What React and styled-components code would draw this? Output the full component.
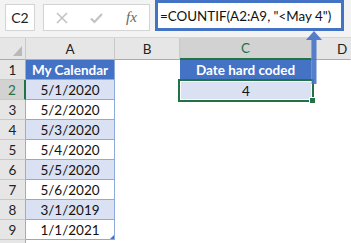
import React from 'react';
import styled, { createGlobalStyle } from 'styled-components';

const dates = ['5/1/2020', '5/2/2020', '5/3/2020', '5/4/2020', '5/5/2020', '5/6/2020', '3/1/2019', '1/1/2021'];

export default function App() {
  return (
    <>
      <GlobalStyle />
      <Window>
        <FormulaBar>
          <NameBox>C2</NameBox>
          <ButtonsBox>
            <svg width="12" height="12" viewBox="0 0 12 12">
              <path d="M1 1 L11 11 M11 1 L1 11" stroke="#c3c3c3" strokeWidth="1.6" fill="none" />
            </svg>
            <svg width="13" height="12" viewBox="0 0 13 12">
              <path d="M1 6.5 L4.5 10 L12 2" stroke="#c3c3c3" strokeWidth="2.2" fill="none" />
            </svg>
            <Fx>fx</Fx>
          </ButtonsBox>
          <FormulaBox>=COUNTIF(A2:A9, "&lt;May 4")</FormulaBox>
        </FormulaBar>

        <Sheet>
          <Corner>
            <svg width="9" height="10" viewBox="0 0 9 10">
              <polygon points="9,0 9,10 0,10" fill="#b9b9b9" />
            </svg>
          </Corner>
          <ColHead>A</ColHead>
          <ColHead>B</ColHead>
          <ColHead $active>C</ColHead>
          <ColHead $last>D</ColHead>

          <RowHead>1</RowHead>
          <TableHead>My Calendar</TableHead>
          <Blank />
          <TableHead>Date hard coded</TableHead>
          <Blank />

          {dates.map((d, i) => {
            const row = i + 2;
            return (
              <React.Fragment key={row}>
                <RowHead $active={row === 2}>{row}</RowHead>
                <DataCell $band={row % 2 === 0}>
                  {d}
                  {row === 9 && <ResizeMark />}
                </DataCell>
                <Blank />
                {row === 2 ? (
                  <SelectedCell>
                    4
                    <FillHandle />
                  </SelectedCell>
                ) : (
                  <Blank />
                )}
                <Blank />
              </React.Fragment>
            );
          })}

          <RowHead />
          <Blank />
          <Blank />
          <Blank />
          <Blank />
        </Sheet>

        <Arrow width="18" height="54" viewBox="0 0 18 54">
          <polygon points="9,0 17,9 11.5,9 11.5,53 6.5,53 6.5,9 1,9" fill="#4472c4" opacity="0.9" />
        </Arrow>
      </Window>
    </>
  );
}

const GlobalStyle = createGlobalStyle`
  body {
    margin: 0;
    background: #fff;
    font-family: Lato, "Open Sans", sans-serif;
  }
`;

const Window = styled.div`
  position: relative;
  width: 351px;
  height: 243px;
  overflow: hidden;
  background: #fff;
`;

const FormulaBar = styled.div`
  display: flex;
  align-items: flex-end;
  height: 38px;
  box-sizing: border-box;
  padding: 0 0 6px 5px;
  background: #f3f3f3;
  border-bottom: 1px solid #d6d6d6;
`;

const NameBox = styled.div`
  width: 30px;
  height: 27px;
  box-sizing: border-box;
  background: #fff;
  border: 1px solid #d4d4d4;
  display: flex;
  align-items: center;
  justify-content: center;
  font-size: 14px;
  color: #222;
`;

const ButtonsBox = styled.div`
  width: 107px;
  height: 27px;
  margin-left: 8px;
  box-sizing: border-box;
  background: #fff;
  border: 1px solid #d4d4d4;
  display: flex;
  align-items: center;
  padding-left: 12px;
  gap: 22px;
`;

const Fx = styled.span`
  font-family: "Liberation Serif", serif;
  font-style: italic;
  font-size: 15px;
  color: #666;
  margin-left: 1px;
`;

const FormulaBox = styled.div`
  width: 189px;
  height: 31px;
  margin-left: 5px;
  box-sizing: border-box;
  background: #fff;
  border: 3px solid #4472c4;
  display: flex;
  align-items: center;
  padding-left: 2px;
  font-size: 13.4px;
  color: #111;
  white-space: nowrap;
  overflow: hidden;
`;

const Sheet = styled.div`
  display: grid;
  grid-template-columns: 26px 89px 65px 132px 1fr;
  grid-template-rows: 22px;
  grid-auto-rows: 20px;
  font-size: 13.5px;
`;

const Corner = styled.div`
  background: #e6e6e6;
  border-right: 1px solid #c9c9c9;
  border-bottom: 1px solid #ababab;
  display: flex;
  align-items: flex-end;
  justify-content: flex-end;
  padding: 0 3px 3px 0;
`;

const ColHead = styled.div`
  display: flex;
  align-items: center;
  background: ${(p) => (p.$active ? '#d2d2d2' : '#e6e6e6')};
  color: ${(p) => (p.$active ? '#217346' : '#222')};
  border-right: 1px solid ${(p) => (p.$last ? 'transparent' : '#c9c9c9')};
  border-bottom: ${(p) => (p.$active ? '2px solid #217346' : '1px solid #ababab')};
  justify-content: ${(p) => (p.$last ? 'flex-start' : 'center')};
  padding-left: ${(p) => (p.$last ? '25px' : '0')};
`;

const RowHead = styled.div`
  display: flex;
  align-items: center;
  justify-content: center;
  background: ${(p) => (p.$active ? '#d2d2d2' : '#e6e6e6')};
  color: ${(p) => (p.$active ? '#217346' : '#222')};
  border-bottom: 1px solid #c9c9c9;
  border-right: ${(p) => (p.$active ? '2px solid #217346' : '1px solid #ababab')};
`;

const TableHead = styled.div`
  display: flex;
  align-items: center;
  justify-content: center;
  background: #4472c4;
  color: #fff;
  font-weight: 700;
  border-bottom: 1px solid #8ea9db;
  border-right: 1px solid #8ea9db;
`;

const DataCell = styled.div`
  position: relative;
  display: flex;
  align-items: center;
  justify-content: center;
  background: ${(p) => (p.$band ? '#d9e1f2' : '#fff')};
  color: #111;
  border-bottom: 1px solid #8ea9db;
  border-right: 1px solid #8ea9db;
`;

const ResizeMark = styled.span`
  position: absolute;
  right: 0;
  bottom: 0;
  width: 0;
  height: 0;
  border-left: 4px solid transparent;
  border-bottom: 4px solid #4472c4;
`;

const Blank = styled.div`
  background: #fff;
`;

const SelectedCell = styled.div`
  position: relative;
  display: flex;
  align-items: center;
  justify-content: center;
  background: #d9e1f2;
  color: #111;
  margin: -1px -2px -2px -2px;
  border: 2px solid #217346;
  box-shadow: inset 0 0 0 1px #fff;
  z-index: 1;
`;

const FillHandle = styled.span`
  position: absolute;
  right: -4px;
  bottom: -4px;
  width: 5px;
  height: 5px;
  background: #217346;
  border: 1px solid #fff;
`;

const Arrow = styled.svg`
  position: absolute;
  left: 305px;
  top: 31px;
  z-index: 2;
`;
